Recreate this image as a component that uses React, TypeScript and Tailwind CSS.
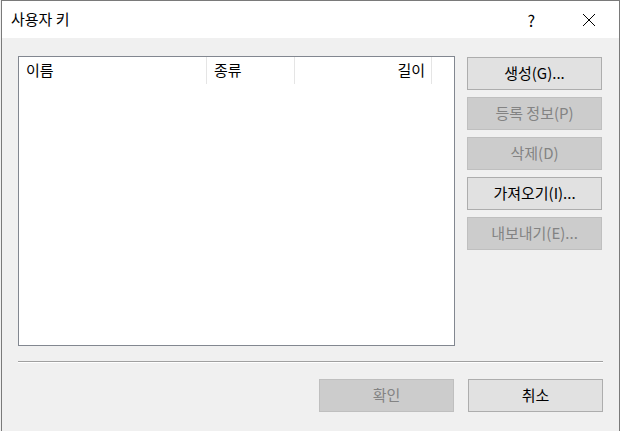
import React from "react";

const font = { fontFamily: '"Noto Sans CJK KR", "Noto Sans", sans-serif' };

function Btn({ label, disabled }: { label: string; disabled?: boolean }) {
  return (
    <button
      className={
        disabled
          ? "h-[33px] w-[135px] border border-[#bfbfbf] bg-[#cccccc] text-[15px] text-[#838383]"
          : "h-[33px] w-[135px] border border-[#adadad] bg-[#e1e1e1] text-[15px] text-black"
      }
    >
      {label}
    </button>
  );
}

export default function App() {
  return (
    <div className="h-[431px] w-[620px] overflow-hidden bg-[#f0f0f0] pl-px" style={font}>
      <div className="flex h-full flex-col border-x border-t border-[#7a7a7a] bg-[#f0f0f0]">
        {/* Title bar */}
        <div className="flex h-[37px] shrink-0 items-center bg-white pl-[9px] text-[15px] text-black">
          <span>사용자 키</span>
          <span className="ml-auto mr-[47px] text-[16px]">?</span>
          <svg width="14" height="14" viewBox="0 0 14 14" className="mr-[23px]">
            <path d="M1 1 L13 13 M13 1 L1 13" stroke="#000" strokeWidth="1" />
          </svg>
        </div>

        {/* Body */}
        <div className="flex flex-col px-[16px] pt-[18px]">
          <div className="flex gap-[12px]">
            <div className="h-[290px] w-[437px] border border-[#828790] bg-white">
              <div className="flex h-[27px] text-[15px] text-black">
                <div className="flex w-[188px] items-center border-r border-[#e5e5e5] pl-[7px]">이름</div>
                <div className="flex w-[88px] items-center border-r border-[#e5e5e5] pl-[7px]">종류</div>
                <div className="flex w-[137px] items-center justify-end border-r border-[#e5e5e5] pr-[6px]">길이</div>
              </div>
            </div>
            <div className="mt-px flex flex-col gap-[7px]">
              <Btn label="생성(G)..." />
              <Btn label="등록 정보(P)" disabled />
              <Btn label="삭제(D)" disabled />
              <Btn label="가져오기(I)..." />
              <Btn label="내보내기(E)..." disabled />
            </div>
          </div>

          <div className="mt-[15px] border-t border-b border-t-[#a0a0a0] border-b-white" />

          <div className="mt-[16px] flex justify-end gap-[14px]">
            <Btn label="확인" disabled />
            <Btn label="취소" />
          </div>
        </div>
      </div>
    </div>
  );
}
